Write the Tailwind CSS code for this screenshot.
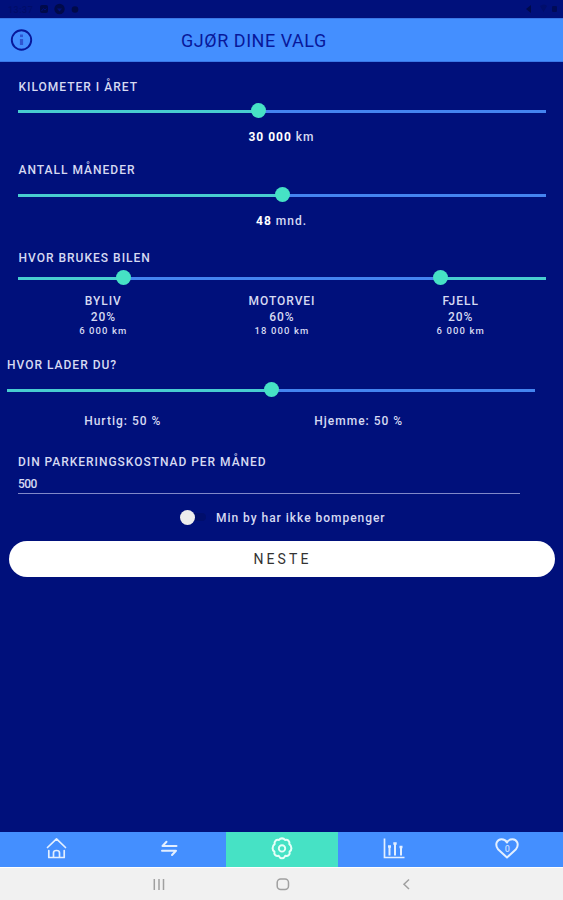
<!DOCTYPE html>
<html lang="no">
<head>
<meta charset="utf-8">
<title>Gjør dine valg</title>
<script src="https://cdn.jsdelivr.net/npm/@tailwindcss/browser@4"></script>
</head>
<body class="bg-[#00107b]">
<div class="w-[563px] h-[900px] flex flex-col overflow-hidden bg-[#00107b] text-[#d6daf2] font-['Roboto',sans-serif] text-[12px] font-medium">
  <!-- status bar -->
  <div class="h-[18px] shrink-0 flex items-center justify-between pl-[8px] pr-[3px] text-[#000a4a]">
    <svg class="w-[74px] h-[18px]" viewBox="0 0 74 18" fill="#000a4a"><text x="0" y="13" font-size="9" opacity=".35" letter-spacing=".5">13:37</text><rect x="32" y="5" width="8" height="8" rx="2"/><path d="M33.500 11l2-2.500 1.500 1.500 1.500-1.500" stroke="#00107b" fill="none"/><circle cx="51.500" cy="9" r="5.200"/><path d="M49 8.500h5l-2.500 3z" fill="#00107b"/><circle cx="67" cy="9.500" r="3.300"/></svg>
    <svg class="w-[40px] h-[18px]" viewBox="0 0 40 18" fill="#000a4a"><path d="M6 9l5-4v8z"/><path d="M20 6q4-3 7 0l-3.500 6z" opacity=".3"/><rect x="32" y="6" width="5" height="6" rx="1" opacity=".7"/></svg>
  </div>
  <!-- header -->
  <header class="h-[44px] shrink-0 flex items-center bg-[#448fff] border-y border-[#3a78e8] text-[#08189a]">
    <svg class="w-[24px] h-[24px] ml-[10px]" viewBox="0 0 24 24" fill="none" stroke="#08189a" stroke-width="1.900"><circle cx="11.500" cy="12" r="9.700"/><path d="M11.500 11v6" stroke="#2f55d2" stroke-width="3.200"/><path d="M11.500 6.500v2.600" stroke="#2f55d2" stroke-width="3"/></svg>
    <h1 class="ml-[147px] pt-[2px] text-[18px] leading-[20px] font-normal tracking-[0.53px] whitespace-nowrap">GJØR DINE VALG</h1>
  </header>
  <main class="flex-1 flex flex-col">
    <div class="pl-[18.5px] mt-[15px] h-[20px] leading-[20px] tracking-[1px]">KILOMETER I ÅRET</div>
    <div class="mt-[7px] ml-[18px] w-[528px] h-[14px] flex items-center">
      <div class="w-[240px] h-[3px] bg-[#48cdd0]"></div><div class="flex-1 h-[3px] bg-[#4484f0]"></div>
      <div class="relative -left-[295px] -top-[1px] w-[15px] h-[15px] -mr-[15px] rounded-full bg-[#46e2c5]"></div>
    </div>
    <div class="mt-[9px] h-[20px] leading-[20px] text-center tracking-[1px]"><b class="font-bold text-white">30 000</b> km</div>

    <div class="pl-[18.5px] mt-[13px] h-[20px] leading-[21px] tracking-[1px]">ANTALL MÅNEDER</div>
    <div class="mt-[8px] ml-[18px] w-[528px] h-[14px] flex items-center">
      <div class="w-[264px] h-[3px] bg-[#48cdd0]"></div><div class="flex-1 h-[3px] bg-[#4484f0]"></div>
      <div class="relative -left-[271px] -top-[1px] w-[15px] h-[15px] -mr-[15px] rounded-full bg-[#46e2c5]"></div>
    </div>
    <div class="mt-[9px] h-[20px] leading-[20px] text-center tracking-[1px]"><b class="font-bold text-white">48</b> mnd.</div>

    <div class="pl-[18.5px] mt-[17px] h-[20px] leading-[20px] tracking-[1px]">HVOR BRUKES BILEN</div>
    <div class="mt-[3px] ml-[18px] w-[528px] h-[15px] flex items-center">
      <div class="w-[106px] h-[3px] bg-[#48cdd0]"></div><div class="flex-1 h-[3px] bg-[#4484f0]"></div><div class="w-[106px] h-[3px] bg-[#48cdd0]"></div>
      <div class="relative -left-[430px] -top-[1px] w-[15px] h-[15px] -mr-[15px] rounded-full bg-[#46e2c5]"></div>
      <div class="relative -left-[113px] -top-[1px] w-[15px] h-[15px] -mr-[15px] rounded-full bg-[#46e2c5]"></div>
    </div>
    <div class="mt-[8px] ml-[14px] w-[536px] grid grid-cols-3 text-center leading-[15px] tracking-[0.95px]">
      <div><div>BYLIV</div><div class="leading-[16px]">20%</div><div class="text-[9.5px] leading-[12px] tracking-[1.1px]">6 000 km</div></div>
      <div><div>MOTORVEI</div><div class="leading-[16px]">60%</div><div class="text-[9.5px] leading-[12px] tracking-[1.1px]">18 000 km</div></div>
      <div><div>FJELL</div><div class="leading-[16px]">20%</div><div class="text-[9.5px] leading-[12px] tracking-[1.1px]">6 000 km</div></div>
    </div>

    <div class="pl-[7px] mt-[18px] h-[20px] leading-[21px] tracking-[1px]">HVOR LADER DU?</div>
    <div class="mt-[8px] ml-[7px] w-[528px] h-[14px] flex items-center">
      <div class="w-[264px] h-[3px] bg-[#48cdd0]"></div><div class="flex-1 h-[3px] bg-[#4484f0]"></div>
      <div class="relative -left-[271px] -top-[1px] w-[15px] h-[15px] -mr-[15px] rounded-full bg-[#46e2c5]"></div>
    </div>
    <div class="mt-[14px] ml-[7px] w-[469px] h-[20px] leading-[21px] grid grid-cols-2 text-center tracking-[1px]"><div class="-ml-[3px]">Hurtig: 50 %</div><div>Hjemme: 50 %</div></div>

    <div class="pl-[18px] mt-[21px] h-[20px] leading-[20px] tracking-[0.97px]">DIN PARKERINGSKOSTNAD PER MÅNED</div>
    <div class="ml-[18px] w-[502px] mt-[3px] h-[19px] leading-[19px] border-b border-[#8088c8] tracking-[-0.6px]">500</div>
    <div class="mt-[13px] h-[20px] flex items-center pl-[180px]">
      <div class="w-[26px] h-[8px] rounded-full flex items-center bg-[#000e6c]"><div class="w-[15px] h-[15px] rounded-full bg-[#ededed]"></div></div>
      <div class="ml-[10px] pt-[1px] leading-[20px] tracking-[0.97px]">Min by har ikke bompenger</div>
    </div>
    <div class="mt-[14px] ml-[9px] w-[546px] h-[36px] rounded-full bg-white text-[#333] text-center text-[14px] leading-[37px] font-normal tracking-[3.1px] pl-[1px]">NESTE</div>
  </main>
  <!-- tab bar -->
  <nav class="h-[35px] shrink-0 grid grid-cols-[112.5px_113px_112.5px_112px_1fr] bg-[#448fff] justify-items-center text-white">
    <svg class="w-[24px] h-[32px]" viewBox="0 0 24 32" fill="none" stroke="#e3efff" stroke-width="1.700" stroke-linecap="round" stroke-linejoin="round"><path d="M3.500 15.500L12.500 6.800l9 8.700M4.800 18.500v7h15.400v-7M9.500 25v-4.300q0-2.200 3-2.200t3 2.200V25"/></svg>
    <svg class="w-[24px] h-[32px]" viewBox="0 0 24 32" fill="none" stroke="#e3efff" stroke-width="2" stroke-linecap="round" stroke-linejoin="round"><path d="M19.500 14H5.500l4-4.300M5 18.700h14l-4 4.300"/></svg>
    <div class="w-full h-full bg-[#46e2c5] flex justify-center">
      <svg class="w-[24px] h-[32px]" viewBox="0 0 24 32" fill="none" stroke="#e6fff8" stroke-width="1.900" stroke-linejoin="round"><path transform="translate(12 16.400) scale(1.080) translate(-12 -16.300)" d="M12 7q1.800 0 2.800 1.500 2.100-.5 3.200.7 1.300 1.200.8 3.100 1.900 1.200 1.900 3.900 0 2-1.700 3.100.5 2-.7 3.200-1.300 1.200-3.300.7Q13.900 25.500 12 25.500t-3-2.300q-2 .5-3.300-.7-1.200-1.200-.7-3.200-1.700-1.100-1.700-3.100 0-2.700 1.900-3.900-.5-1.900.8-3.100 1.100-1.200 3.200-.7Q10.200 7 12 7z"/><circle cx="12" cy="16.400" r="3.200"/></svg>
    </div>
    <svg class="w-[24px] h-[32px]" viewBox="0 0 24 32" fill="none" stroke="#e3efff" stroke-width="1.700"><path d="M2.500 6.500v19h20"/><path d="M7.500 14.500V23.500M13 11V23.500M19 15V23.500" stroke-width="2"/><path d="M6 14.500h3M11.300 11.500h3.400M17.500 15h3" stroke-width="2.500"/></svg>
    <svg class="w-[24px] h-[32px]" viewBox="0 0 24 32" fill="none" stroke="#e3efff" stroke-width="2" stroke-linejoin="round"><path d="M12 25.500L3 17.200C-.5 12.500 2 7.300 6.500 7.300c2.500 0 4.500 1.200 5.500 3.200C13 8.500 15 7.300 17.500 7.300c4.500 0 7 5.200 3.500 9.900z"/><text x="12.200" y="19.500" text-anchor="middle" font-size="9" fill="#c5dcff" stroke="none">0</text></svg>
  </nav>
  <!-- system navigation -->
  <div class="h-[33px] shrink-0 bg-[#f1f1f1] border-t border-white flex items-center">
    <svg class="w-[14px] h-[14px] ml-[152px]" viewBox="0 0 14 14" stroke="#a0a0a0" stroke-width="1.500"><path d="M2.300 2v11M7 2v11M11.500 2v11"/></svg>
    <svg class="w-[14px] h-[14px] ml-[110px]" viewBox="0 0 14 14" fill="none" stroke="#a0a0a0" stroke-width="1.500"><rect x="1.200" y="2" width="11.300" height="10.500" rx="3.500"/></svg>
    <svg class="w-[14px] h-[14px] ml-[109px]" viewBox="0 0 14 14" fill="none" stroke="#a0a0a0" stroke-width="1.500"><path d="M10 2.500L5 7.200l5 4.800"/></svg>
  </div>
</div>
</body>
</html>
